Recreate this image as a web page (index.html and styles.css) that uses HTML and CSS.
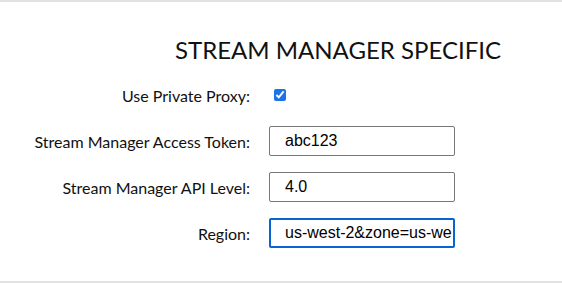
FILE: index.html
```html
<!DOCTYPE html>
<html lang="en">

<head>
  <meta charset="UTF-8">
  <meta name="viewport" content="width=device-width, initial-scale=1.0">
  <link rel="stylesheet" href="styles.css">
  <title>Stream Manager Specific</title>
</head>

<body>

  <div class="section">
    <h2 class="section-title">STREAM MANAGER SPECIFIC</h2>

    <div class="form">
      <label class="label" for="proxy">Use Private Proxy:</label>
      <div class="field">
        <input type="checkbox" id="proxy" class="check" checked>
      </div>

      <label class="label" for="token">Stream Manager Access Token:</label>
      <div class="field">
        <input type="text" id="token" class="text-input" value="abc123">
      </div>

      <label class="label" for="api">Stream Manager API Level:</label>
      <div class="field">
        <input type="text" id="api" class="text-input" value="4.0">
      </div>

      <label class="label" for="region">Region:</label>
      <div class="field">
        <input type="text" id="region" class="text-input focused" value="us-west-2&zone=us-we">
      </div>
    </div>
  </div>

</body>

</html>
```

FILE: styles.css
```css
body {
  margin: 0;
  background-color: #fff;
  font-family: Lato, "Open Sans", sans-serif;
  color: #111;
}

.section {
  border-top: 2px solid #e2e2e2;
  border-bottom: 2px solid #e2e2e2;
  height: 283px;
  box-sizing: border-box;
}

.section-title {
  margin: 0;
  padding: 33px 0 0 175px;
  font-size: 24px;
  font-weight: 400;
  line-height: 30px;
  color: #111;
}

.form {
  display: grid;
  grid-template-columns: 250px 186px;
  column-gap: 19px;
  row-gap: 16px;
  align-items: center;
  margin-top: 15px;
}

.label {
  text-align: right;
  font-size: 16px;
}

.field {
  height: 30px;
  display: flex;
  align-items: center;
}

.check {
  width: 12px;
  height: 12px;
  margin: 0 0 0 5px;
  accent-color: #1a73e8;
}

.text-input {
  width: 186px;
  height: 30px;
  box-sizing: border-box;
  border: 1px solid #777;
  border-radius: 2px;
  padding: 0 0 0 15px;
  font-family: "Liberation Sans", Arial, sans-serif;
  font-size: 16px;
  color: #000;
  outline: none;
}

.text-input.focused {
  border: 2px solid #0b63d1;
  padding-left: 14px;
}
```
